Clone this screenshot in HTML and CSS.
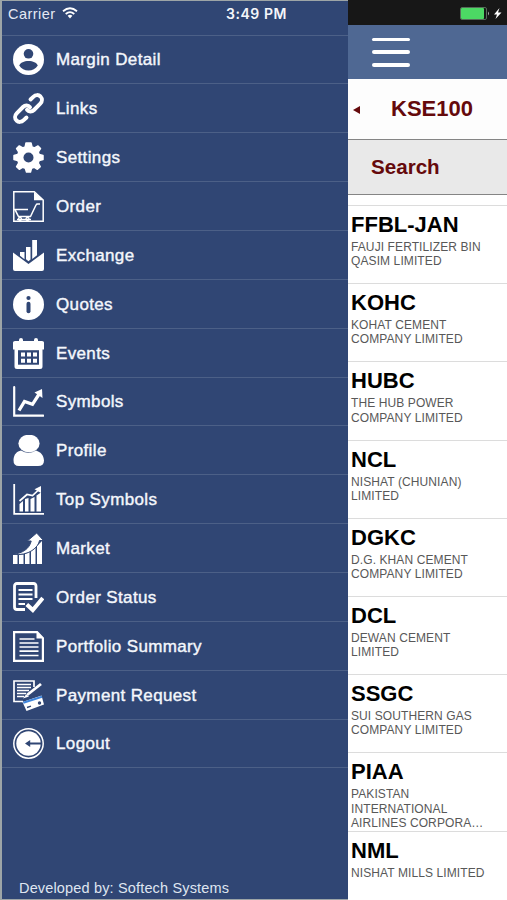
FILE: index.html
```html
<!DOCTYPE html>
<html lang="en">
<head>
<meta charset="utf-8">
<title>KSE100</title>
<link rel="stylesheet" href="styles.css">
</head>
<body>
<div class="screen">
  <aside class="drawer">
    <div class="status">
      <span class="carrier">Carrier</span>
      <svg class="wifi" viewBox="0 0 16 12"><g fill="none" stroke="#fff" stroke-width="1.8"><path d="M1 4.3Q8-1.7 15 4.3"/><path d="M3.7 7Q8 3.3 12.3 7"/></g><path d="M5.6 8.8Q8 6.8 10.4 8.8L8 11.4z" fill="#fff"/></svg>
      <span class="time">3:49 PM</span>
    </div>
    <nav class="menu">
      <a class="item"><svg viewBox="0 0 31 31"><circle cx="15.5" cy="15.5" r="15.5"/><circle class="cut" cx="15.5" cy="9.8" r="4.8"/><path class="cut" d="M6.2 21.5C7.5 18.6 11 17 15.5 17s8 1.600 9.300 4.500C22.500 24.700 19.500 26.500 15.500 26.500S8.500 24.700 6.200 21.500z"/></svg><span>Margin Detail</span></a>
      <a class="item"><svg viewBox="0 0 31 31"><g class="line" stroke-width="3.900" stroke-linecap="round"><path d="M17.500 6.500l2.800-2.700c2.300-2.300 5.300-2.200 7.200-.3 1.900 2 2 5-.2 7.200l-6.300 6.300c-2.200 2.200-5.300 2-7-.2"/><path d="M13.500 24.500l-2.800 2.700c-2.300 2.300-5.300 2.200-7.200.3-1.900-2-2-5 .2-7.200L10 14c2.200-2.200 5.300-2 7 .2"/></g></svg><span>Links</span></a>
      <a class="item"><svg viewBox="0 0 31 31"><path stroke="#fff" stroke-width="1.500" stroke-linejoin="round" d="M13 1h5l1 4 2.500 1L25 3.900 27.500 6.500 25.200 10l1 2.500L30 13.500v4l-3.800 1-1 2.500 2 3.600-2.800 2.700L21 25.200l-2.500 1L17.500 30h-4l-1.200-3.800-2.500-1-3.500 2.100-2.700-2.700L5.800 21l-1-2.500L1 17.500v-4l3.800-1 1-2.500L3.600 6.500 6.300 3.900 9.800 6l2.400-1z"/><circle class="cut" cx="15.500" cy="15.500" r="5"/></svg><span>Settings</span></a>
      <a class="item"><svg viewBox="0 0 31 31"><path class="line" stroke-width="1.500" d="M.8.8h20.500L30.200 9v21.200H.8z"/><path d="M21 1v8.300h9.500z"/><path class="line" stroke-width="1.500" d="M1 18.600h14M2 18.600L5.500 25.500h12L23 14q.4-1 1.500-1H27M4 28.500h14"/><g class="line" stroke-width="1.300"><circle cx="7" cy="28" r="1.500"/><circle cx="14.500" cy="28" r="1.500"/></g></svg><span>Order</span></a>
      <a class="item"><svg viewBox="0 0 31 31"><path d="M0 12.500l15.500 11.500L31 12.500V29q0 2-2 2H2q-2 0-2-2zM7 12h4.500v7.200L7 15.800zM13 7h4.500v12.500l-2 1.700-2.500-2zM19.200 0H24v15.300l-4.800 3.600z"/></svg><span>Exchange</span></a>
      <a class="item"><svg viewBox="0 0 31 31"><circle cx="15.500" cy="15.500" r="15.500"/><circle class="cut" cx="15.500" cy="9" r="2.100"/><rect class="cut" x="13.500" y="12.800" width="4" height="11.500" rx="2"/></svg><span>Quotes</span></a>
      <a class="item"><svg viewBox="0 0 31 31"><path d="M0 4.500Q0 3 2 3h4V2q0-2 2-2t2 2v1h11V2q0-2 2-2t2 2v1h4q2 0 2 1.500V11.500H0zM1.500 10h28v18.500q0 2.500-2.500 2.500H4q-2.500 0-2.500-2.500z"/><path class="cut" d="M5 12.200h21v14.500H5z"/><path d="M8 14.500h4v4H8zM14 14.500h4v4h-4zM20 14.500h4v4h-4zM8 20.700h4v4H8zM14 20.700h4v4h-4zM20 20.700h4v4h-4z"/></svg><span>Events</span></a>
      <a class="item"><svg viewBox="0 0 31 31"><path class="line" stroke-width="2.200" stroke-linecap="round" d="M1.200 1.200v28.500h29"/><path class="line" stroke-width="3.300" d="M6 24.500L11.500 15.500l8 2.800L26.500 7.500"/><path d="M21.500 6.500l7.500-3.500.5 9z"/></svg><span>Symbols</span></a>
      <a class="item"><svg viewBox="0 0 31 31"><path d="M.5 25C.8 19 4 16.500 8 15.500q7.500 4.500 15 0C27.500 17 30.700 20 31 25.500Q31 31 25 31H6Q.3 31 .5 25z"/><ellipse cx="16" cy="8.500" rx="10.600" ry="8.800"/></svg><span>Profile</span></a>
      <a class="item"><svg viewBox="0 0 31 31"><path class="line" stroke-width="1.800" d="M1.200 0v29.800H31"/><path d="M6.500 20l3.500-3v10.500H6.500zM12 15l3.500-1v13.500H12zM17.500 15l4-2v14.500h-4zM23.500 11.500l4.500-3v19h-4.500z"/><path class="line" stroke-width="1.700" d="M6.500 17l7.500-6.500 5.500 1L26 5.500"/><path d="M21.500 5.300L28 2v7z"/></svg><span>Top Symbols</span></a>
      <a class="item"><svg viewBox="0 0 31 31"><path d="M0 22h4.500v9H0zM6 22l4.500-.6V31H6zM12 21l4.500-2V31H12zM18 18l4.500-3.500V31H18zM24 13l5-5v23h-5z"/><path stroke="#304674" stroke-width="1" d="M0 21.200C9 20.500 16.500 16 18.200 8h-3.900L23.700 0l6.800 7.500h-4C25.500 14 16 23.500 0 21.200z"/></svg><span>Market</span></a>
      <a class="item"><svg viewBox="0 0 31 31"><path class="line" stroke-width="2.800" d="M23 16V4q0-2.500-2.500-2.500H4Q1.500 1.500 1.500 4v21q0 2.500 2.500 2.500h8"/><path class="line" stroke-width="2" d="M5.500 8h14M5.500 12.500h14M5.500 17h14M5.500 22h6.500"/><path class="line" stroke-width="4" d="M13.800 22.500l6 5.500 10-12"/></svg><span>Order Status</span></a>
      <a class="item"><svg viewBox="0 0 31 31"><path class="line" stroke-width="2.200" d="M1.100 1.100h23l5.800 6v22.800H1.100z"/><path d="M23.500 0L31 7.500h-7.500z"/><path class="line" stroke-width="1.700" d="M6.500 8h15M6.500 12h19M6.500 16h19M6.500 20.200h19M6.500 24.500h19"/></svg><span>Portfolio Summary</span></a>
      <a class="item"><svg viewBox="0 0 31 31"><path class="line" stroke-width="1.700" d="M21 7V1H1v20.500h9"/><path class="line" stroke-width="1.400" d="M4 4.500h14M4 7.500h14M4 10.500h12M4 13.500h9M4 16.500h7"/><path class="line" stroke-width="2.800" d="M14 15L28 4"/><path d="M10 18.500l3-4 3 2z"/><path d="M9.500 22l19-6.500 2.500 9-17.500 6.500z"/><path stroke="#3e85dc" stroke-width="2" d="M10.300 22.700l18.700-5.900"/><path stroke="#304674" stroke-width="1.400" d="M14 27.500l4-1.300"/><circle class="cut" cx="26.500" cy="23" r="1.700"/></svg><span>Payment Request</span></a>
      <a class="item"><svg viewBox="0 0 31 31"><circle class="line" stroke-width="1.500" cx="15.500" cy="15.500" r="14.700"/><circle cx="15.500" cy="15.500" r="12.200"/><path class="cut" d="M12 15.500l5.200-3.500v2.600h11.500v1.800H17.200V19z"/></svg><span>Logout</span></a>
    </nav>
    <footer class="credit">Developed by: Softech Systems</footer>
  </aside>
  <main class="market">
    <div class="system"><svg viewBox="0 0 42 15"><rect x=".5" y=".5" width="26" height="12" rx="1.500" fill="none" stroke="#566b59"/><rect x="1" y="1" width="23" height="11" rx="1" fill="#4cd964"/><path d="M28 4.500q2 2 0 4z" fill="#aaa"/><path d="M39.500 1L34 7.500h3L35.500 12l6-6.500H38z" fill="#fff"/></svg></div>
    <header class="topbar"><div class="burger"><i></i><i></i><i></i></div></header>
    <div class="index"><i class="back"></i><h1>KSE100</h1></div>
    <div class="search">Search</div>
    <ul class="stocks">
      <li><h2>FFBL-JAN</h2><p>FAUJI FERTILIZER BIN<br>QASIM LIMITED</p></li>
      <li><h2>KOHC</h2><p>KOHAT CEMENT<br>COMPANY LIMITED</p></li>
      <li><h2>HUBC</h2><p>THE HUB POWER<br>COMPANY LIMITED</p></li>
      <li><h2>NCL</h2><p>NISHAT (CHUNIAN)<br>LIMITED</p></li>
      <li><h2>DGKC</h2><p>D.G. KHAN CEMENT<br>COMPANY LIMITED</p></li>
      <li><h2>DCL</h2><p>DEWAN CEMENT<br>LIMITED</p></li>
      <li><h2>SSGC</h2><p>SUI SOUTHERN GAS<br>COMPANY LIMITED</p></li>
      <li><h2>PIAA</h2><p>PAKISTAN<br>INTERNATIONAL<br>AIRLINES CORPORA…</p></li>
      <li><h2>NML</h2><p>NISHAT MILLS LIMITED</p></li>
    </ul>
  </main>
</div>
</body>
</html>
```
FILE: styles.css
```css
* { box-sizing: border-box; }
body, h1, h2, p, ul { margin: 0; padding: 0; }
body { font-family: "Liberation Sans", Arial, sans-serif; background: #fff; }
.screen { display: grid; grid-template-columns: 348px 1fr; height: 900px; overflow: hidden; }

.drawer { display: flex; flex-direction: column; background: #304674; color: #fff; border: solid #9da5a7; border-width: 1px 0 1px 2px; }
.status { display: flex; height: 33.500px; flex: none; padding-left: 6px; font-size: 14.500px; line-height: 26px; color: #e4e9f3; }
.carrier { width: 54px; letter-spacing: .45px; }
.wifi { width: 16px; height: 12px; margin-top: 6px; }
.time { margin-left: 148px; font-family: Inter, sans-serif; font-size: 14px; font-weight: 600; letter-spacing: .55px; color: #f4f6fa; white-space: nowrap; }
.menu { display: grid; grid-template-rows: repeat(15, 48.870px); border-bottom: 1px solid #4c6087; }
.item { display: flex; align-items: center; gap: 12px; padding: 1px 0 0 11px; border-top: 1px solid #4c6087; color: #f4f7fc; font-size: 17px; letter-spacing: .36px; -webkit-text-stroke: .4px #f4f7fc; }
.item svg { width: 31px; height: 31px; fill: #fff; flex: none; -webkit-text-stroke: 0; }
.item span { padding-top: 1px; }
.item .cut { fill: #304674; }
.item .line { fill: none; stroke: #fff; }
.credit { margin-top: auto; padding: 0 0 2px 17px; font-size: 14.500px; line-height: 17px; letter-spacing: .16px; color: #dfe5f0; }

.market { display: flex; flex-direction: column; min-width: 0; background: #fff; overflow: hidden; }
.system { height: 25px; flex: none; display: flex; justify-content: flex-end; padding: 7px 5px 0 0; background: #171717; }
.system svg { width: 42px; height: 15px; }
.topbar { height: 54px; flex: none; padding: 12.500px 0 0 24px; background: #4f6893; }
.burger { display: flex; flex-direction: column; gap: 9.700px; width: 38px; }
.burger i { height: 3.300px; border-radius: 2px; background: #fff; }
.index { height: 60px; flex: none; display: flex; align-items: center; padding-left: 5px; color: #650a0c; background: #fdfdfd; }
.back { border: solid transparent; border-width: 4px 7px 4px 0; border-right-color: #650a0c; margin-top: 2px; }
.index h1 { margin-left: 31px; font-size: 22px; }
.search { height: 56px; flex: none; padding-left: 23px; border: solid #858585; border-width: 1px 0; background: #e9e9e9; color: #650a0c; font-size: 20.600px; font-weight: bold; line-height: 54px; }
.stocks { list-style: none; margin-top: 10px; }
.stocks li { height: 78.200px; padding: 6px 0 0 3px; border-top: 1px solid #dcdcdc; overflow: hidden; }
.stocks h2 { font-size: 22px; line-height: 25px; color: #000; }
.stocks p { margin-top: 3px; font-size: 12px; line-height: 14.300px; color: #585858; white-space: nowrap; letter-spacing: .1px; }
```
